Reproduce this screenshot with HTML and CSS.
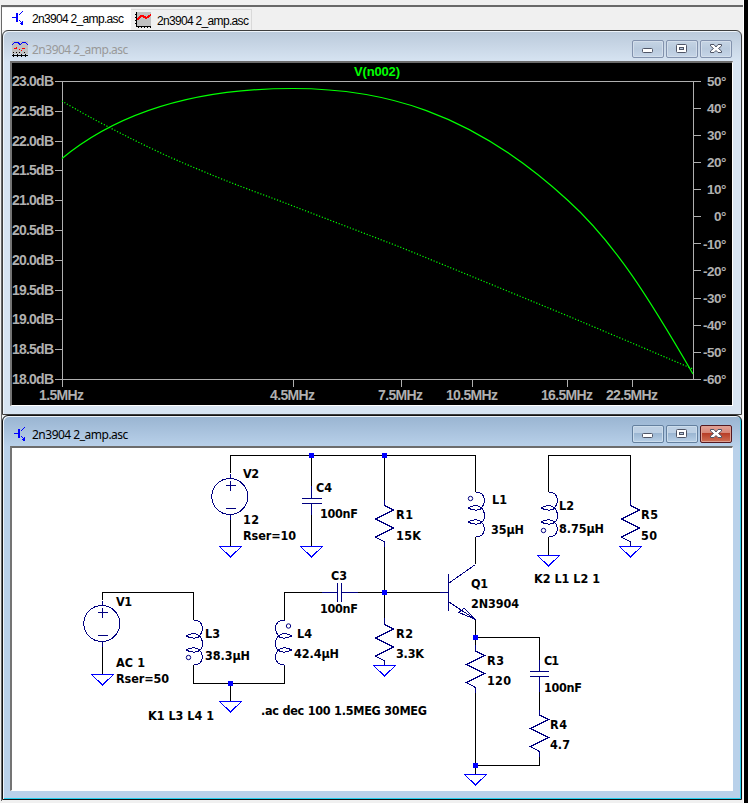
FILE: index.html
```
<!DOCTYPE html>
<html lang="en">
<head>
<meta charset="utf-8">
<title>2n3904 2_amp.asc</title>
<link rel="stylesheet" href="styles.css">
</head>
<body>
<svg width="0" height="0" class="defs">
  <defs>
    <g id="npn" fill="none" stroke="#00f" shape-rendering="crispEdges">
      <path d="M0 7.500H5M7 5L11 1M7 10L11 14"/><path stroke-width="2" d="M5 3V12"/><path fill="#00f" stroke="none" d="M11 15v-5l-4 4z"/>
    </g>
    <path id="res" d="M0 0L9 4.500L-9 13.500L9 22.500L-9 31.500L0 36.500V40"/>
    <path id="gnd" class="gnd" d="M-11 0H11L0 10.500Z"/>
    <path id="ind" d="M0 0C5 0 9 3 9 8C9 12 7 15 5 17C2 19-4 18-7 16C-3 13 3 12.500 6 16C9 19 9 23 9 24C9 27 7 30 5 31C2 33-4 32-7 30C-3 27 3 27 6 30C9 33 9 35 9 37C9 42 5 45 0 45"/>
    <g id="src"><circle cx="-.7" r="18"/><path d="M-5-11H5M0-16V-6M-5 12H5M0-23V-18M0 18V23"/></g>
    <rect id="node" x="-2" y="-2" width="5" height="5" class="node"/>
    <g id="min"><rect x="9.500" y="8.500" width="10" height="4" rx="1" fill="#fff" stroke="#4f5566"/></g>
    <g id="max" stroke="#4f5566"><rect x="9.500" y="4.500" width="10" height="8" rx="1" fill="#fff"/><rect x="12.500" y="7.500" width="4" height="2" fill="#b7c8dc"/></g>
    <path id="close" d="M9.500 4.500H13L15 7L17 4.500H20.500V6L17.500 8.500L20.500 11V12.500H17L15 10.500L13 12.500H9.500V11L12.500 8.500L9.500 6Z" fill="#fff" stroke="#4f5566"/>
  </defs>
</svg>
<div class="app">
  <div class="toolbar"></div>
  <div class="main">
    <nav class="tabs">
      <div class="tab active"><svg width="16" height="16"><use href="#npn" x="1"/></svg><span>2n3904 2_amp.asc</span></div>
      <div class="tab"><svg width="17" height="17" shape-rendering="crispEdges"><path fill="#c0c0c0" d="M1 0H16V14H1z"/><path fill="none" stroke="#000" d="M1.500 0V14.500H16M0 2.500h2M0 5.500h2M0 8.500h2M0 11.500h2M3.500 14v2M6.500 14v2M9.500 14v2M12.500 14v2M15.500 14v2"/><path d="M2 8L6 4L8 4L11 6L16 3" fill="none" stroke="red" stroke-width="2"/></svg><span>2n3904 2_amp.asc</span></div>
    </nav>
    <section class="window plotwin">
      <header class="title"><svg class="ticon" width="16" height="16" shape-rendering="crispEdges"><path fill="#c0c0c0" d="M0 0H16V13H0z"/><path fill="none" stroke="#00f" d="M0 4L3 1H6L8 4L11 1H13L16 4"/><path stroke="red" d="M2 7.500H5M7 8.500h1M10 7.500h3M4 6.500h1M9 9.500h1"/><path fill="none" stroke="#000" d="M0 14.500H16M1.500 13v3M5.500 13v3M9.500 13v3M13.500 13v3M1 11.500h1M4 11.500h1M7 11.500h1M12 11.500h1"/></svg><span>2n3904 2_amp.asc</span>
        <div class="buttons"><i class="btn"><svg width="30" height="16"><use href="#min"/></svg></i><i class="btn"><svg width="30" height="16"><use href="#max"/></svg></i><i class="btn"><svg width="30" height="16"><use href="#close"/></svg></i></div>
      </header>
      <div class="client">
        <svg class="plot" width="720" height="342" viewBox="12 63 720 342">
          <path class="axis" d="M55 81.500H701M55 379.500H701M62.500 81V387M693.500 81V380M55 111.500H62M55 141.500H62M55 170.500H62M55 200.500H62M55 230.500H62M55 260.500H62M55 290.500H62M55 319.500H62M55 349.500H62M694 108.500H701M694 135.500H701M694 162.500H701M694 189.500H701M694 216.500H701M694 243.500H701M694 270.500H701M694 298.500H701M694 325.500H701M694 352.500H701M293.500 379V387M401.500 379V387M472.500 379V387M567.500 379V387M632.500 379V387"/>
          <path class="trace" d="M62 158.500C110 119 180 88.500 293 88.500C380 88.500 470 110 568 200.500C615 243 650 300 693 374"/>
          <path class="trace phase" d="M62 101C90 118 150 150 200 170C240 187 265 195 293 206L400 247L500 288L568 316L632 343L693 369"/>
          <text class="name" x="354" y="76" textLength="46">V(n002)</text>
          <g class="db">
            <text x="12" y="86" textLength="42">23.0dB</text><text x="12" y="116" textLength="42">22.5dB</text><text x="12" y="146" textLength="42">22.0dB</text><text x="12" y="175" textLength="42">21.5dB</text><text x="12" y="205" textLength="42">21.0dB</text><text x="12" y="235" textLength="42">20.5dB</text><text x="12" y="265" textLength="42">20.0dB</text><text x="12" y="295" textLength="42">19.5dB</text><text x="12" y="324" textLength="42">19.0dB</text><text x="12" y="354" textLength="42">18.5dB</text><text x="12" y="384" textLength="42">18.0dB</text>
            <text x="39" y="400" textLength="45">1.5MHz</text><text x="270" y="400" textLength="45">4.5MHz</text><text x="378" y="400" textLength="45">7.5MHz</text><text x="446" y="400" textLength="52">10.5MHz</text><text x="541" y="400" textLength="52">16.5MHz</text><text x="606" y="400" textLength="52">22.5MHz</text>
          </g>
          <g class="db deg">
            <text x="726" y="86">50°</text><text x="726" y="113">40°</text><text x="726" y="140">30°</text><text x="726" y="167">20°</text><text x="726" y="194">10°</text><text x="726" y="221">0°</text><text x="726" y="249">-10°</text><text x="726" y="276">-20°</text><text x="726" y="303">-30°</text><text x="726" y="330">-40°</text><text x="726" y="357">-50°</text><text x="726" y="384">-60°</text>
          </g>
        </svg>
      </div>
    </section>
    <section class="window schemwin">
      <header class="title"><svg class="ticon" width="16" height="16"><use href="#npn" x="2"/></svg><span>2n3904 2_amp.asc</span>
        <div class="buttons"><i class="btn"><svg width="30" height="16"><use href="#min"/></svg></i><i class="btn"><svg width="30" height="16"><use href="#max"/></svg></i><i class="btn red"><svg width="30" height="16"><use href="#close"/></svg></i></div>
      </header>
      <div class="client">
        <svg class="schem" width="720" height="342" viewBox="12 448 720 342">
          <path class="wire" d="M230.500 473V455.500H475.500V492M230.500 519V546M311.500 455V487M311.500 514V546M384.500 455V501M384.500 546V619M475.500 537V564M284.500 620V592.500H322M358 592.500H440M548.500 492V455.500H630.500V501M548.500 537V555M102.500 600V592.500H193.500V620M102.500 646V674M193.500 665V683.500H284.500V665M230.500 683V701M475.500 619V646M475.500 637.500H539.500V660M475.500 692V774M475.500 765.500H539.500V756M539.500 692V711"/>
          <g class="part">
            <use href="#src" x="230.500" y="496.500"/><use href="#src" x="102.500" y="623.500"/>
            <path d="M311.500 486V498.500M302 498.500H322M302 503.500H322M311.500 503V515"/>
            <path d="M322 592.500H337.500M337.500 583V602M341.500 583V602M341.500 592.500H358"/>
            <path d="M539.500 660V671.500M530 671.500H549M530 676.500H549M539.500 676V692"/>
            <path d="M384.500 500V506M384.500 541V547M384.500 618V624M475.500 645V651M539.500 710V715M630.500 500V506M539.500 753V757M475.500 689V693"/>
            <use href="#res" x="384.500" y="505.500"/><use href="#res" x="384.500" y="624.500"/><use href="#res" x="475.500" y="651"/><use href="#res" x="539.500" y="715"/><use href="#res" x="630.500" y="505.500"/>
            <use href="#ind" x="475.500" y="492"/><use href="#ind" x="548.500" y="492"/><use href="#ind" x="193.500" y="620"/><use href="#ind" transform="translate(284.500 620) scale(-1 1)"/>
            <g class="phasing"><circle cx="470.500" cy="498.500" r="2.200"/><circle cx="543.500" cy="530.500" r="2.200"/><circle cx="188.500" cy="657.500" r="2.200"/><circle cx="288.500" cy="626" r="2.200"/></g>
            <path d="M440 592.500H448.500M448.500 574V611M449 583L475.500 564.500M449 602L475.500 619.500L464 608L459 612.500L475.500 619.500"/>
          </g>
          <use href="#gnd" x="230.500" y="546.500"/><use href="#gnd" x="311.500" y="546.500"/><use href="#gnd" x="384.500" y="665.500"/><use href="#gnd" x="102.500" y="674.500"/><use href="#gnd" x="230.500" y="701.500"/><use href="#gnd" x="548.500" y="555.500"/><use href="#gnd" x="630.500" y="546.500"/><use href="#gnd" x="475.500" y="774.500"/>
          <use href="#node" x="311" y="455"/><use href="#node" x="384" y="455"/><use href="#node" x="384" y="592"/><use href="#node" x="230" y="683"/><use href="#node" x="475" y="637"/><use href="#node" x="475" y="765"/>
          <g class="label">
            <text x="243" y="478" textLength="16">V2</text><text x="243" y="524" textLength="16">12</text><text x="243" y="540" textLength="53">Rser=10</text><text x="316" y="492" textLength="16">C4</text><text x="320" y="518" textLength="38">100nF</text>
            <text x="396" y="519" textLength="17">R1</text><text x="396" y="540" textLength="25">15K</text><text x="331" y="580" textLength="16">C3</text><text x="320" y="613" textLength="38">100nF</text>
            <text x="492" y="504" textLength="15">L1</text><text x="491" y="534" textLength="33">35µH</text><text x="471" y="588" textLength="17">Q1</text><text x="471" y="608" textLength="48">2N3904</text>
            <text x="559" y="510" textLength="15">L2</text><text x="559" y="533" textLength="45">8.75µH</text><text x="534" y="583" textLength="66">K2 L1 L2 1</text><text x="641" y="519" textLength="17">R5</text><text x="641" y="540" textLength="16">50</text>
            <text x="116" y="606" textLength="16">V1</text><text x="116" y="667" textLength="29">AC 1</text><text x="116" y="683" textLength="53">Rser=50</text><text x="205" y="638" textLength="15">L3</text><text x="205" y="660" textLength="45">38.3µH</text><text x="148" y="720" textLength="66">K1 L3 L4 1</text>
            <text x="297" y="638" textLength="15">L4</text><text x="294" y="658" textLength="45">42.4µH</text><text x="396" y="638" textLength="17">R2</text><text x="396" y="658" textLength="28">3.3K</text><text x="261" y="715" textLength="166">.ac dec 100 1.5MEG 30MEG</text>
            <text x="487" y="665" textLength="17">R3</text><text x="487" y="685" textLength="24">120</text><text x="544" y="665" textLength="15">C1</text><text x="544" y="692" textLength="38">100nF</text><text x="550" y="729" textLength="17">R4</text><text x="550" y="749" textLength="20">4.7</text>
          </g>
        </svg>
      </div>
    </section>
  </div>
</div>
</body>
</html>
```
FILE: styles.css
```
* { box-sizing: border-box; }
body { margin: 0; background: #000; overflow: hidden; }
.defs { display: block; height: 0; }
.app { width: 744px; height: 803px; background: #f0f0f0; border-right: 1px solid #fff; overflow: hidden; }
.toolbar { height: 5px; }
.main { width: 742px; height: 796px; margin-left: 1px; border-top: 2px solid #696969; border-left: 1px solid #696969; }
.tabs { height: 23px; display: flex; align-items: flex-end; font: 12px "Liberation Sans", Arial, sans-serif; color: #000; }
.tab { height: 21px; display: flex; align-items: center; gap: 5px; padding-left: 4px; width: 121px; border: 1px solid #d9d9d9; border-left: 0; border-bottom: 0; white-space: nowrap; }
.tab svg { flex: none; }
.tab span { letter-spacing: -.68px; padding-top: 1px; }
.tab.active { width: 129px; height: 22px; gap: 5px; padding: 0 0 3px 9px; background: #fff; border-color: #fff; }
.window { display: flex; flex-direction: column; width: 740px; border-radius: 6px 6px 0 0; }
.plotwin { height: 385px; background: linear-gradient(#bac9da, #d7e4f2 31px); border: 1px solid #3d3d3d; box-shadow: inset 1px 1px #eef4fa; padding: 0 8px 8px 7px; }
.schemwin { height: 385px; background: linear-gradient(#99b4d1, #b9d1ea 31px); border: 1px solid #111; box-shadow: inset 1px 1px #eef4fa, inset -1px -1px #22cfee; padding: 0 8px 8px 7px; }
.title { height: 30px; flex: none; display: flex; align-items: center; color: #999; font: 12px "Noto Sans", "Open Sans", sans-serif; padding: 6px 0 0 2px; white-space: nowrap; }
.title > span { width: 100px; margin-left: 4px; letter-spacing: -.5px; }
.schemwin .title { color: #000; }
.ticon { flex: none; }
.buttons { margin-left: auto; display: flex; gap: 2px; padding-right: 1px; }
.btn { display: block; width: 32px; height: 18px; border: 1px solid #8292ad; border-radius: 2px; background: linear-gradient(#c5d4e4, #b9cadd 50%, #c5d5e7); box-shadow: inset 0 0 0 1px #d3deeb; }
.btn svg { display: block; margin-top: -1px; }
.schemwin .btn { border-color: #64809f; background: linear-gradient(#bdd0e4 45%, #9bb6d2 46%, #b8d0e7); box-shadow: inset 0 0 0 1px #ccddec; }
.schemwin .btn.red { border-color: #541820; background: linear-gradient(#e5a197, #d58575 45%, #b73d27 46%, #cf7055); box-shadow: inset 0 0 0 1px #dea193; }
.client { flex: none; width: 723px; height: 345px; border-top: 2px solid #6c6c6c; border-left: 2px solid #747474; border-right: 1px solid #fff; border-bottom: 1px solid #fff; background: #fff; }
.client svg { display: block; }
.plot { background: #000; }
.axis { fill: none; stroke: #b0b0b0; shape-rendering: crispEdges; }
.trace { fill: none; stroke: #0f0; stroke-width: 1.2; }
.phase { stroke-dasharray: 1.2 1.8; }
.name, .db { font: bold 14px "Liberation Sans", Arial, sans-serif; fill: #b0b0b0; }
.name { font-size: 13px; fill: #0f0; }
.deg { text-anchor: end; font-size: 13.5px; letter-spacing: -.5px; }
.wire { fill: none; stroke: #000; shape-rendering: crispEdges; }
.part { fill: none; stroke: #000080; shape-rendering: crispEdges; }
.phasing { shape-rendering: geometricPrecision; }
.gnd { fill: none; stroke: #00f; shape-rendering: crispEdges; }
.node { fill: #00f; }
.label { font: bold 12.5px "DejaVu Sans Condensed", "DejaVu Sans", sans-serif; fill: #000; }
```
